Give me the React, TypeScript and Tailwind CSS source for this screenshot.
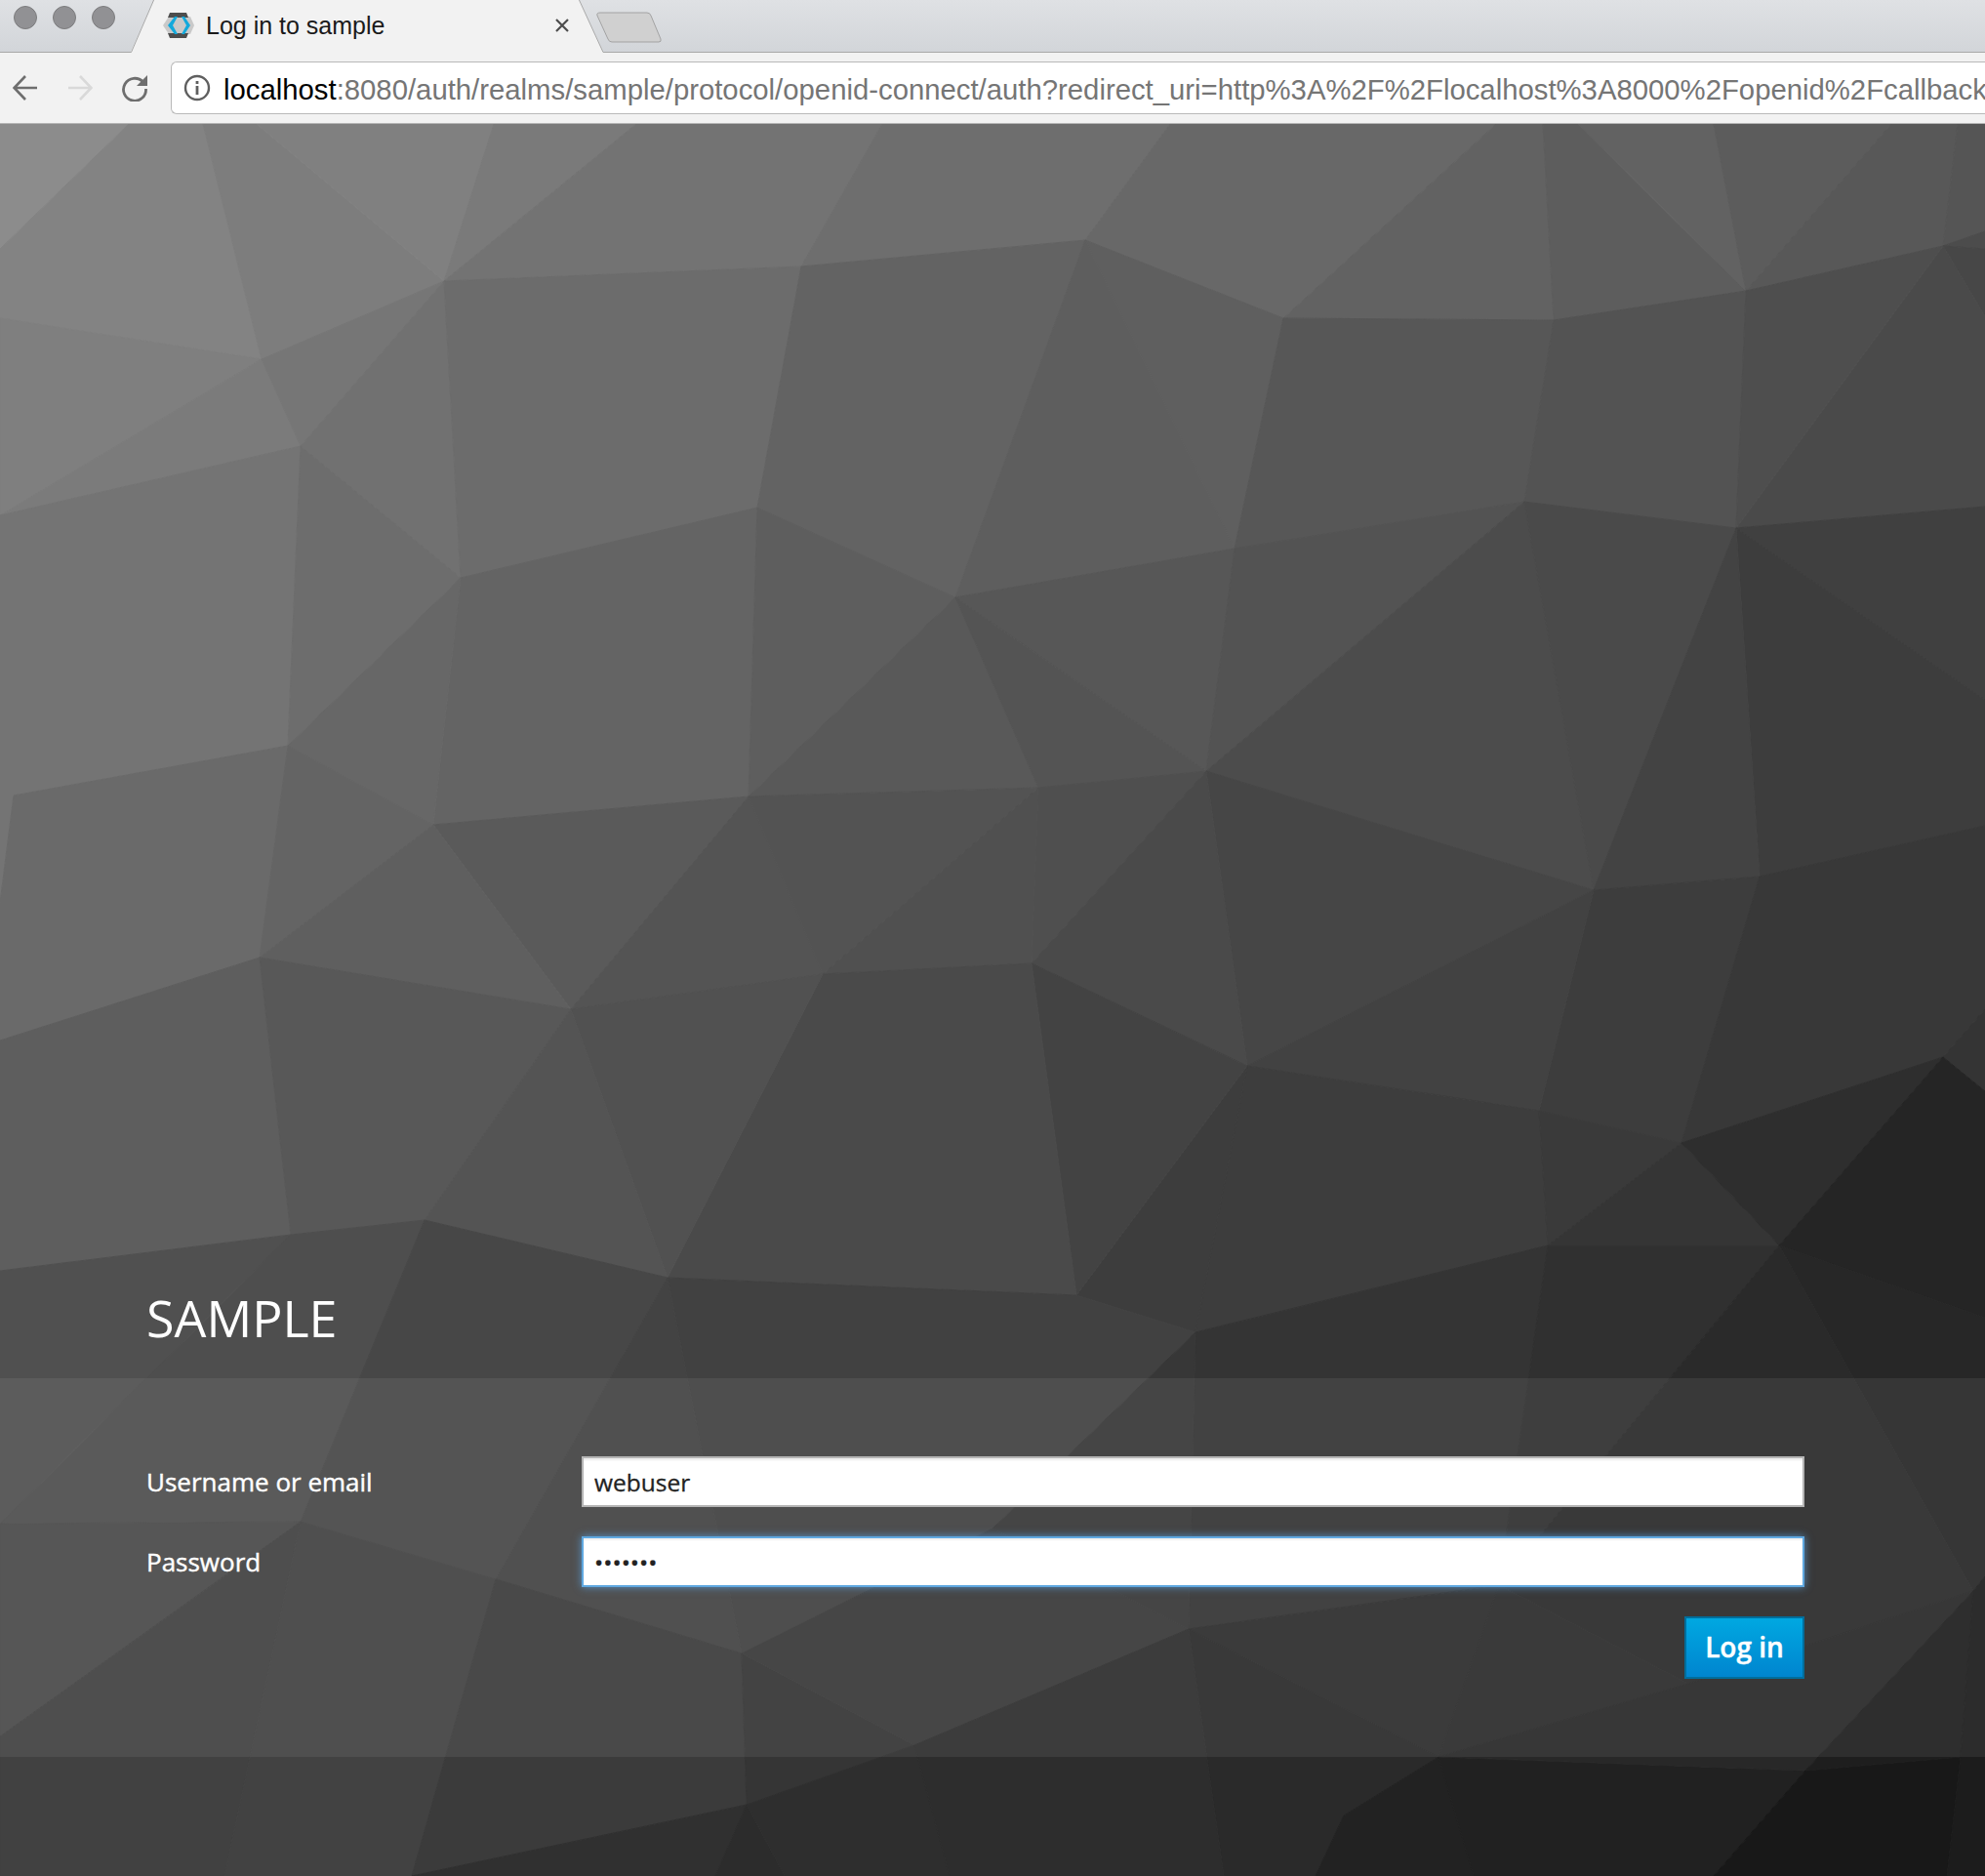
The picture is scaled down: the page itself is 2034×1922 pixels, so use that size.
const V: Record<string, [number, number]> = {
  a0: [0, 127], a1: [132, 127], a2: [208, 127], a3: [263, 127], a4: [506, 127], a5: [652, 127], a6: [904, 127],
  a7: [1199, 127], a8: [1533, 127], a9: [1581, 127], a10: [1617, 127], a11: [1756, 127], a12: [1938, 127], a13: [2006, 127], a14: [2034, 127],
  l1: [0, 255], l2: [0, 326], l3: [0, 528], l4: [0, 925], l5: [0, 1066], l6: [0, 1302], l7: [0, 1561], l8: [0, 1779], l9: [0, 1922],
  r1: [2034, 237], r2: [2034, 255], r3: [2034, 324], r4: [2034, 519], r5: [2034, 717], r6: [2034, 846], r7: [2034, 1034], r8: [2034, 1118], r9: [2034, 1350], r10: [2034, 1615], r11: [2034, 1922],
  b1: [230, 1922], b2: [422, 1922], b3: [733, 1922], b4: [804, 1922], b5: [973, 1922], b6: [1254, 1922], b7: [1348, 1922], b8: [1510, 1922], b9: [1756, 1922], b10: [1995, 1922],
  A: [455, 288], B: [268, 368], C: [308, 457], D: [472, 592], E: [776, 520], F: [821, 273], G: [295, 764], H: [14, 815], I: [444, 845], J: [767, 816], K: [979, 612], L: [266, 981], M: [843, 998], N: [585, 1034],
  P: [298, 1265], Q: [435, 1250], R: [684, 1309], S: [308, 1559], T: [508, 1618], U: [760, 1694], W: [765, 1849], X: [937, 1788], Y: [1218, 1669],
  Z1: [1112, 246], Z2: [1315, 326], Z3: [1592, 328], Z4: [1789, 298], Z5: [1991, 252], Z6: [1265, 562], Z7: [1562, 514], Z8: [1779, 541], Z9: [1236, 790], Z10: [1064, 807], Z11: [1057, 987], Z12: [1633, 912], Z13: [1803, 898],
  c1: [1278, 1092], c2: [1103, 1327], c3: [1225, 1365], c4: [1577, 1138], c5: [1586, 1276], c6: [1723, 1171], c7: [1823, 1276], c8: [1991, 1083],
  d1: [1536, 1624], d2: [1474, 1800], d3: [1377, 1860], d4: [1850, 1814], d5: [2022, 1630], d6: [1730, 1725], d7: [2009, 1800], f: [1017, 1566],
};

// the low-poly backdrop: fill, then vertex names
const POLYS: [string, string][] = [
  ["#8c8c8c", "a0 a1 l1"],
  ["#838383", "a1 a2 B l2 l1"],
  ["#7d7d7d", "a2 a3 A B"],
  ["#808080", "a3 a4 A"],
  ["#7a7a7a", "a4 a5 A"],
  ["#737373", "a5 a6 F A"],
  ["#6e6e6e", "a6 a7 Z1 F"],
  ["#7f7f7f", "l2 B l3"],
  ["#7b7b7b", "B C l3"],
  ["#767676", "A B C"],
  ["#717171", "A C D"],
  ["#6c6c6c", "A F E D"],
  ["#636363", "F Z1 K E"],
  ["#747474", "l3 C G H l4"],
  ["#6d6d6d", "C D G"],
  ["#646464", "D E J I"],
  ["#5e5e5e", "E K J"],
  ["#676767", "G D I"],
  ["#6a6a6a", "l4 H G L l5"],
  ["#646464", "G I L"],
  ["#5a5a5a", "I J N"],
  ["#5f5f5f", "L I N"],
  ["#595959", "K J Z10"],
  ["#545454", "J M N"],
  ["#535353", "J Z10 M"],
  ["#686868", "a7 a8 Z2 Z1"],
  ["#626262", "a8 a9 Z3 Z2"],
  ["#5d5d5d", "a9 a10 Z4 Z3"],
  ["#626262", "a10 a11 Z4"],
  ["#5c5c5c", "a11 a12 Z4"],
  ["#585858", "a12 a13 Z5 Z4"],
  ["#555555", "a13 a14 r1 Z5"],
  ["#4c4c4c", "Z5 r1 r2"],
  ["#474747", "Z5 r2 r3"],
  ["#4a4a4a", "Z5 r3 r4 Z8"],
  ["#5f5f5f", "Z1 Z2 Z6"],
  ["#5e5e5e", "Z1 Z6 K"],
  ["#575757", "Z2 Z3 Z7 Z6"],
  ["#535353", "Z3 Z4 Z8 Z7"],
  ["#4e4e4e", "Z4 Z5 Z8"],
  ["#575757", "K Z6 Z9"],
  ["#545454", "K Z9 Z10"],
  ["#535353", "Z6 Z7 Z9"],
  ["#4c4c4c", "Z7 Z12 Z9"],
  ["#4a4a4a", "Z7 Z8 Z12"],
  ["#404040", "Z8 r4 r5"],
  ["#3d3d3d", "Z8 r5 r6 Z13"],
  ["#434343", "Z8 Z12 Z13"],
  ["#464646", "Z9 Z12 c1"],
  ["#4f4f4f", "Z10 Z9 Z11"],
  ["#4a4a4a", "Z11 Z9 c1"],
  ["#3d3d3d", "Z12 Z13 c6 c4"],
  ["#383838", "Z13 r6 r7 c8 c6"],
  ["#424242", "Z12 c4 c1"],
  ["#505050", "Z10 Z11 M"],
  ["#3d3d3d", "c1 c4 c5 c3"],
  ["#3d3d3d", "c1 c2 c3"],
  ["#434343", "Z11 c1 c2"],
  ["#4a4a4a", "M Z11 c2 R"],
  ["#515151", "N M R"],
  ["#414141", "R c2 c3 f U"],
  ["#343434", "c3 c5 d1 Y"],
  ["#303030", "c5 c7 d1"],
  ["#3a3a3a", "c4 c6 c5"],
  ["#353535", "c6 c7 c5"],
  ["#2e2e2e", "c6 c8 c7"],
  ["#343434", "c8 r7 r8"],
  ["#252525", "c8 r8 r9 c7"],
  ["#272727", "c7 r9 r10 d5"],
  ["#2a2a2a", "c7 d5 d6 d1"],
  ["#2c2c2c", "Y d1 d2"],
  ["#2b2b2b", "d1 d6 d2"],
  ["#2a2a2a", "Y d2 d3 b7 b6"],
  ["#222222", "d2 d3 b7 b8"],
  ["#212121", "d2 d4 b9 b8"],
  ["#282828", "d2 d6 d5 d4"],
  ["#181818", "d4 d7 b10 b9"],
  ["#1e1e1e", "d4 d5 d7"],
  ["#1c1c1c", "d5 r10 r11 b10 d7"],
  ["#5e5e5e", "l5 L P l6"],
  ["#585858", "L N Q P"],
  ["#545454", "N R Q"],
  ["#505050", "l6 P l7"],
  ["#4e4e4e", "P Q S l7"],
  ["#474747", "Q R T S"],
  ["#434343", "R U T"],
  ["#494949", "l7 S l8"],
  ["#414141", "l8 S b1 l9"],
  ["#424242", "S T b2 b1"],
  ["#3b3b3b", "T U W b2"],
  ["#353535", "U X W"],
  ["#383838", "U f Y X"],
  ["#373737", "f c3 Y"],
  ["#303030", "W b3 b2"],
  ["#2c2c2c", "W b4 b3"],
  ["#2e2e2e", "W X b5 b4"],
  ["#2d2d2d", "X Y b6 b5"],
];

const pts = (names: string) =>
  names
    .split(" ")
    .map((n) => V[n].join(","))
    .join(" ");

function Backdrop() {
  return (
    <svg className="absolute inset-0 h-full w-full" viewBox="0 127 2034 1795" preserveAspectRatio="none">
      {POLYS.map(([fill, names], i) => (
        <polygon key={i} points={pts(names)} fill={fill} stroke={fill} strokeWidth={1} />
      ))}
    </svg>
  );
}

function KeycloakIcon() {
  return (
    <svg width="32" height="32" viewBox="0 0 32 32" className="shrink-0">
      <path d="M0 16 6 7h22l4 9-4 9H6z" fill="#c9c9c9" />
      <path d="M7 3h17l2 5H5zM7 29h17l2-5H5z" fill="#4d4d4d" />
      <path d="M12 7 5 16l7 9h3l-5-9 5-9zM19 7h3l6 9-6 9h-3l5-9z" fill="#12a9dc" />
    </svg>
  );
}

function TabStrip() {
  return (
    <div className="relative flex h-[54px] items-center bg-gradient-to-b from-[#dfe1e4] to-[#d2d5d9] pl-[14px]">
      <svg className="absolute inset-0 h-[54px] w-[2034px]" viewBox="0 0 2034 54">
        <path d="M158 -1 134 53H0v1h2034v-1H618L593 -1z" fill="#f2f2f2" />
        <path d="M158 -1 134.500 53.500H0M593 -1 618 53.500H2034" fill="none" stroke="#a8a8a8" strokeWidth="1" />
        <path d="M615 13H663q3 0 4 3L677 40q1 3-2 3H627q-3 0-4-3L612 16q-1-3 3-3z" fill="#d0d0d0" stroke="#a3a3a3" strokeWidth="1" />
      </svg>
      <div className="relative flex items-center gap-4 self-start pt-[6px]">
        <span className="h-6 w-6 rounded-full border border-[#7c7c7e] bg-[#919194]" />
        <span className="h-6 w-6 rounded-full border border-[#7c7c7e] bg-[#919194]" />
        <span className="h-6 w-6 rounded-full border border-[#7c7c7e] bg-[#919194]" />
      </div>
      <div className="relative ml-[49px] flex w-[415px] items-center pb-[2px]">
        <KeycloakIcon />
        <span className="ml-[12px] font-['Liberation_Sans',sans-serif] text-[25px] leading-none text-[#1a1a1a]">Log in to sample</span>
        <svg width="16" height="16" viewBox="0 0 16 16" className="ml-auto mr-[-2px]">
          <path d="M2 2 14 14M14 2 2 14" stroke="#4d4d4d" strokeWidth="2.200" />
        </svg>
      </div>
    </div>
  );
}

function Toolbar() {
  return (
    <div className="flex h-[73px] items-center border-b border-[#b4b4b4] bg-[#f2f2f2] pl-[13px]">
      <svg width="26" height="26" viewBox="0 0 26 26" className="shrink-0">
        <path d="M25 13H2M13 1 1.500 13 13 25" fill="none" stroke="#6e6e6e" strokeWidth="2.600" />
      </svg>
      <svg width="26" height="26" viewBox="0 0 26 26" className="ml-[30px] shrink-0">
        <path d="M1 13h23M13 1l11.500 12L13 25" fill="none" stroke="#d9d9d9" strokeWidth="2.600" />
      </svg>
      <svg width="28" height="28" viewBox="0 0 28 28" className="ml-[29px] shrink-0">
        <path d="M22.500 8A11.500 11.500 0 1 0 25.500 15" fill="none" stroke="#6e6e6e" strokeWidth="2.800" />
        <path d="M27 1v11H16z" fill="#6e6e6e" />
      </svg>
      <div className="ml-[23px] flex h-[54px] flex-1 items-center overflow-hidden rounded-l-[6px] border-y border-l border-[#b9b9b9] bg-white pl-[12px]">
        <svg width="28" height="28" viewBox="0 0 28 28" className="shrink-0">
          <circle cx="14" cy="14" r="12" fill="none" stroke="#5f5f5f" strokeWidth="2.400" />
          <rect x="12.600" y="12" width="2.800" height="9" fill="#5f5f5f" />
          <rect x="12.600" y="7" width="2.800" height="3" fill="#5f5f5f" />
        </svg>
        <span className="ml-[13px] whitespace-nowrap pt-[3px] font-['Liberation_Sans',sans-serif] text-[29.300px] leading-none text-[#757575]">
          <span className="text-black">localhost</span>:8080/auth/realms/sample/protocol/openid-connect/auth?redirect_uri=http%3A%2F%2Flocalhost%3A8000%2Fopenid%2Fcallback
        </span>
      </div>
    </div>
  );
}

function Field({ label, value, focused }: { label: string; value: string; focused?: boolean }) {
  return (
    <div className="flex items-center">
      <label className="w-[446px] text-[26px] leading-none text-white [-webkit-text-stroke:0.4px_white]">{label}</label>
      <input
        readOnly
        value={value}
        type={focused ? "password" : "text"}
        className={
          "h-[52px] w-[1253px] border-2 bg-white px-[11px] text-[24.500px] text-[#222] outline-none [-webkit-text-stroke:0.3px_#222] " +
          (focused
            ? "border-[#5fa8e0] shadow-[0_0_8px_rgba(90,165,235,0.75),inset_0_2px_2px_rgba(0,0,0,0.06)]"
            : "border-[#b5b5b5] shadow-[inset_0_2px_2px_rgba(0,0,0,0.08)]")
        }
      />
    </div>
  );
}

export default function App() {
  return (
    <div className="h-[1922px] w-[2034px] overflow-hidden font-['Open_Sans',sans-serif]">
      <TabStrip />
      <Toolbar />
      <main className="relative flex h-[1795px] flex-col">
        <Backdrop />
        <header className="relative flex h-[1285px] shrink-0 items-end pb-[36px] pl-[150px]">
          <h1 className="text-[52px] font-normal leading-none text-white">SAMPLE</h1>
        </header>
        <section className="relative flex h-[388px] shrink-0 flex-col bg-white/[0.07] pl-[150px] pt-[80px]">
          <form className="flex w-[1699px] flex-col gap-[30px]">
            <Field label="Username or email" value="webuser" />
            <Field label="Password" value="1234567" focused />
            <div className="flex justify-end">
              <button
                type="button"
                className="h-[64px] w-[123px] border-2 border-[#006e9c] bg-gradient-to-b from-[#00a8e1] to-[#0085cf] pb-[2px] text-[28px] font-semibold leading-none text-white [-webkit-text-stroke:0.4px_white]"
              >
                Log in
              </button>
            </div>
          </form>
        </section>
      </main>
    </div>
  );
}
